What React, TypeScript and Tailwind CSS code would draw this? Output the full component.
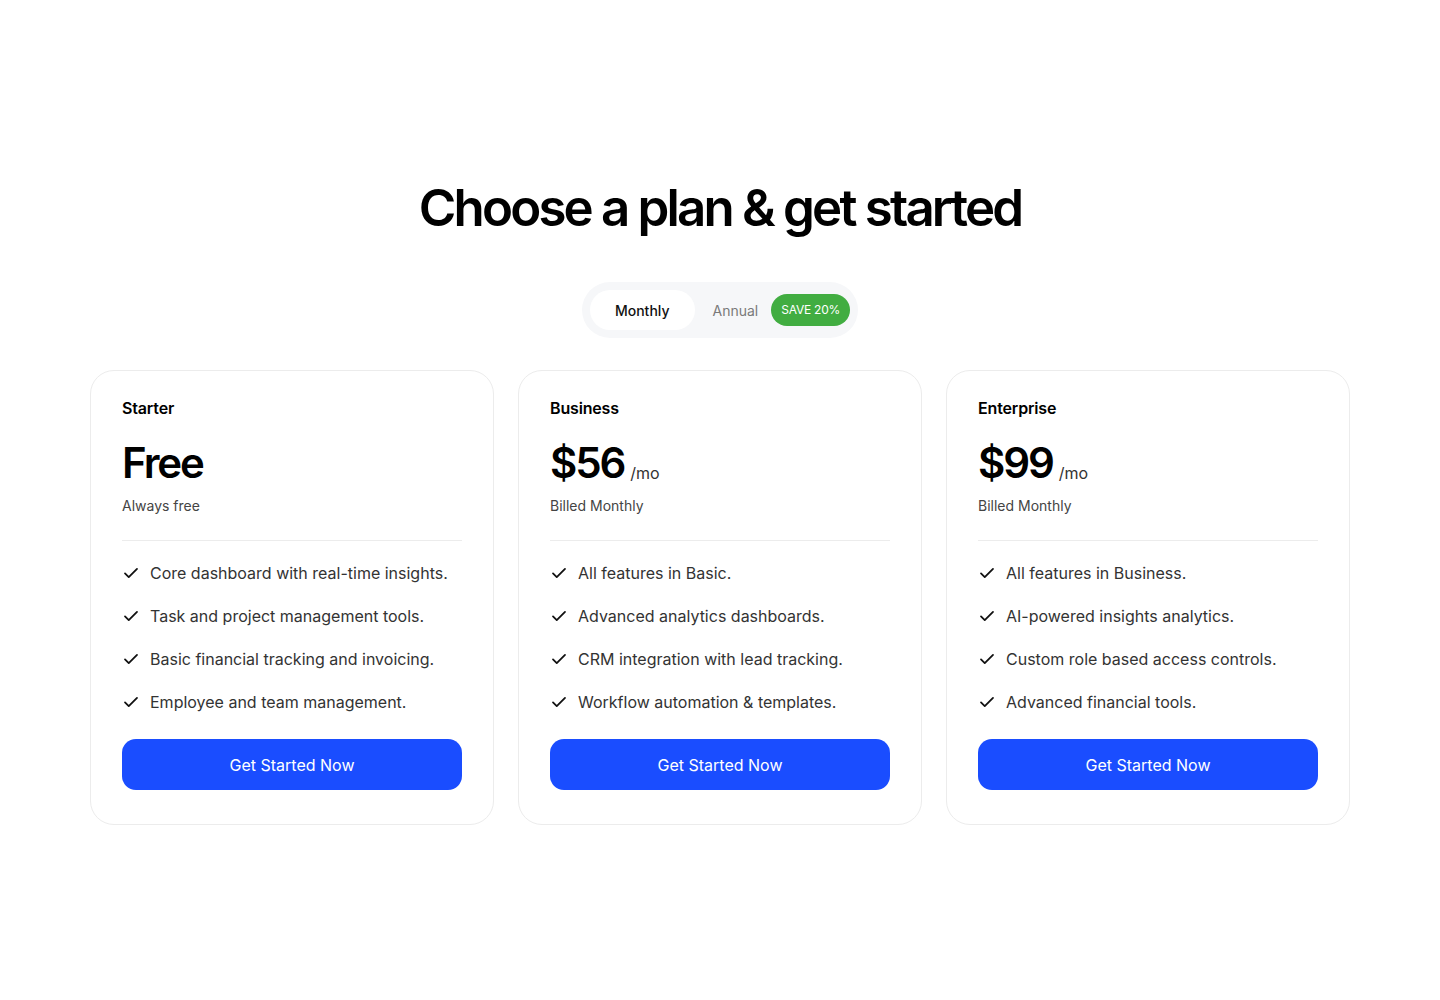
import React from "react";

const plans = [
  {
    name: "Starter",
    price: "Free",
    per: "",
    note: "Always free",
    features: [
      "Core dashboard with real-time insights.",
      "Task and project management tools.",
      "Basic financial tracking and invoicing.",
      "Employee and team management.",
    ],
  },
  {
    name: "Business",
    price: "$56",
    per: "/mo",
    note: "Billed Monthly",
    features: [
      "All features in Basic.",
      "Advanced analytics dashboards.",
      "CRM integration with lead tracking.",
      "Workflow automation & templates.",
    ],
  },
  {
    name: "Enterprise",
    price: "$99",
    per: "/mo",
    note: "Billed Monthly",
    features: [
      "All features in Business.",
      "AI-powered insights analytics.",
      "Custom role based access controls.",
      "Advanced financial tools.",
    ],
  },
];

function Check() {
  return (
    <svg width="18" height="18" viewBox="0 0 24 24" fill="none" stroke="#111" strokeWidth="2.4" strokeLinecap="round" strokeLinejoin="round" className="shrink-0">
      <path d="M4 12.5l5 5L20 6.5" />
    </svg>
  );
}

export default function App() {
  return (
    <div className="min-h-[1000px] bg-white text-black" style={{ fontFamily: "Inter, 'Noto Sans', sans-serif" }}>
      <div className="flex flex-col items-center pt-[176px]">
        <h1 className="text-[51px] leading-[64px] font-semibold tracking-[-0.055em]">Choose a plan &amp; get started</h1>
        <div className="mt-[42px] flex items-center rounded-full bg-[#f6f7f9] p-2 h-[56px]">
          <div className="h-[40px] px-[25px] flex items-center rounded-full bg-white text-[14px] text-[#111] font-medium">Monthly</div>
          <div className="pl-[18px] pr-[13px] text-[14px] text-[#7a7a7a]">Annual</div>
          <div className="h-[32px] px-[10px] flex items-center rounded-full bg-[#41ad41] text-white text-[12px] tracking-[-0.02em]">SAVE 20%</div>
        </div>
        <div className="mt-[32px] grid grid-cols-3 gap-6 w-[1260px]">
          {plans.map((p) => (
            <div key={p.name} className="rounded-[24px] border border-[#ececec] bg-white px-[31px] pt-[25px] pb-[34px]">
              <div className="text-[16px] leading-6 font-semibold tracking-[-0.01em]">{p.name}</div>
              <div className="mt-[19px] flex items-end gap-[6px] h-[48px]">
                <span className="text-[42px] leading-[48px] font-semibold tracking-[-0.05em]">{p.price}</span>
                {p.per && <span className="text-[16px] leading-6 text-[#333] mb-[2px]">{p.per}</span>}
              </div>
              <div className="mt-[9px] text-[14px] leading-5 text-[#444]">{p.note}</div>
              <div className="mt-[24px] h-px bg-[#ececec]" />
              <ul className="mt-[20px] flex flex-col gap-[19px]">
                {p.features.map((f) => (
                  <li key={f} className="flex items-center gap-[10px] text-[16px] leading-6 text-[#333]">
                    <Check />
                    <span>{f}</span>
                  </li>
                ))}
              </ul>
              <button className="mt-[25px] w-full h-[51px] rounded-[14px] bg-[#1a4dff] text-white text-[16px]">Get Started Now</button>
            </div>
          ))}
        </div>
      </div>
    </div>
  );
}
